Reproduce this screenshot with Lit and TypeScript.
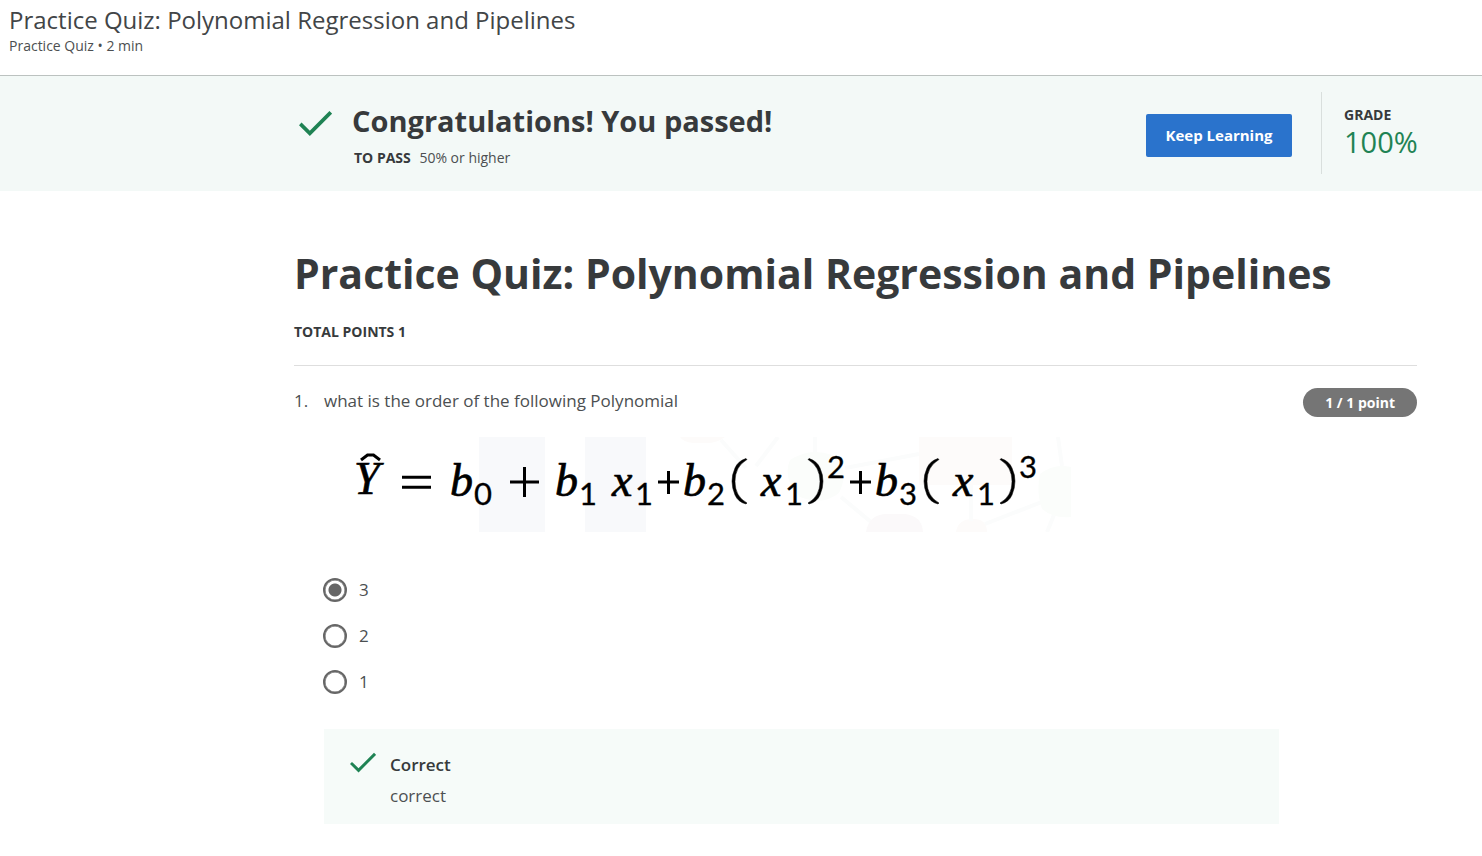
import { LitElement, html, css, svg } from "lit";
import { customElement, property, state } from "lit/decorators.js";

@customElement("check-mark")
class CheckMark extends LitElement {
  static styles = css`
    :host { display: block; }
    .mark { display: block; width: 100%; height: auto; }
    .stroke { fill: none; stroke: #1f8354; stroke-width: 3.6; }
  `;
  render() {
    return html`<svg class="mark" viewBox="0 0 32 26" aria-hidden="true">
      <path class="stroke" d="M1.2 13.5 L10.5 22.6 L30.8 2.3" />
    </svg>`;
  }
}

@customElement("pass-banner")
class PassBanner extends LitElement {
  static styles = css`
    :host { display: block; background: #f3f9f7; border-top: 1px solid #bcc2c0; }
    .inner { display: flex; align-items: flex-start; padding: 16px 65px 17px 299px; }
    .check { width: 33px; margin: 18px 20px 0 0; }
    .copy { flex: 1; padding-top: 9px; }
    .title { margin: 0; font-size: 29px; line-height: 40px; font-weight: 700; }
    .rule { margin: 6px 0 0 2px; font-size: 14px; line-height: 22px; color: #4c4f51; }
    .rule b { margin-right: 5px; color: #373a3c; }
    .keep {
      margin: 22px 29px 0 0; width: 146px; height: 43px; border: 0; border-radius: 2px; padding: 0 0 2px;
      background: #2a73cc; color: #fff; font: 700 15px/20px "Open Sans", sans-serif;
    }
    .grade { border-left: 1px solid #d9dfdd; padding: 13px 0 12px 22px; height: 57px; width: 73px; }
    .label { font-size: 14px; line-height: 20px; font-weight: 700; }
    .score { font-size: 29px; line-height: 34px; color: #1f8354; }
  `;
  render() {
    return html`<div class="inner">
      <check-mark class="check"></check-mark>
      <div class="copy">
        <h2 class="title">Congratulations! You passed!</h2>
        <p class="rule"><b>TO PASS</b> 50% or higher</p>
      </div>
      <button class="keep" type="button">Keep Learning</button>
      <div class="grade">
        <div class="label">GRADE</div>
        <div class="score">100%</div>
      </div>
    </div>`;
  }
}

type Glyph = [kind: string, x: number, y: number, text: string];

const GLYPHS: Glyph[] = [
  ["var", 354, 494, "Y"],
  ["var", 450, 496, "b"], ["sub", 474, 505, "0"],
  ["var", 555, 496, "b"], ["sub", 579, 505, "1"],
  ["var", 612, 496, "x"], ["sub", 635, 505, "1"],
  ["var", 683, 496, "b"], ["sub", 707, 505, "2"],
  ["var", 761, 496, "x"], ["sub", 785, 505, "1"],
  ["sub", 827, 478, "2"],
  ["var", 875, 496, "b"], ["sub", 899, 505, "3"],
  ["var", 953, 496, "x"], ["sub", 977, 505, "1"],
  ["sub", 1019, 478, "3"],
];

@customElement("polynomial-figure")
class PolynomialFigure extends LitElement {
  static styles = css`
    :host { display: block; }
    .figure { display: block; width: 748px; max-width: 100%; height: auto; }
    .var { font: italic 46px "Liberation Serif", serif; stroke: #000; stroke-width: 0.7; }
    .sub { font: 31px Lato, sans-serif; stroke: #000; stroke-width: 0.3; }
    .line { fill: none; stroke: #000; stroke-width: 3; }
    .paren { fill: #000; stroke: #000; stroke-width: 0.5; }
    .blue { fill: #f8f9fb; }
    .peach { fill: #fdfbfa; }
    .rose { fill: #fbf9fa; }
    .green { fill: #fbfdfb; }
    .edge { fill: none; stroke: #fbfcfc; stroke-width: 4; }
  `;
  render() {
    return html`<svg class="figure" viewBox="324 437 748 95" role="img" aria-label="Polynomial equation of order three">
      <path class="blue" d="M479 437h66v95h-66zM585 437h61v95h-61z" />
      <path class="peach" d="M919 437h93v48h-93zM680 437h45q-8 6-18 6h-14q-10-1-13-6zM956 532q2-13 17-13 14 0 14 13z" />
      <path class="edge" d="M721 440l25 28M778 437l-22 29M815 437v24M845 468l74-14M841 497l30 25M971 485v36M985 524l62-24M1058 437l4 29M1056 510l-9 22" />
      <path class="green" d="M790 460q20-13 42-5 19 13 7 38-16 13-39 4-18-18-10-37zM1040 474q14-11 31-7v50q-17 2-29-8-6-17-2-35z" />
      <path class="rose" d="M866 532q3-18 21-18h18q17 2 18 18z" />
      <path class="line" d="M402 477.3h29M402 487.3h29M510 482h29M524.5 467v30M658 482h21M668.5 471v23M850 482h21M860.5 471v23" />
      <path class="line" d="M361 460L367.5 455H373.5L380 460" />
      ${[0, 192].map(
        (dx) => svg`<path class="paren" transform="translate(${dx} 0)"
          d="M747 459.5q-12 7-12 22t12 21.500l-1 1q-8-2-11-9-6-14 0-27 3-7 11-9.500zM808 459.500q12 7 12 22t-12 21.500l1 1q8-2 11-9 6-14 0-27-3-7-11-9.500z" />`,
      )}
      ${GLYPHS.map(([kind, x, y, text]) => svg`<text class=${kind} x=${x} y=${y}>${text}</text>`)}
    </svg>`;
  }
}

@customElement("quiz-question")
class QuizQuestion extends LitElement {
  @property({ type: Array }) choices: string[] = ["3", "2", "1"];
  @state() private selected = "3";

  static styles = css`
    :host { display: block; font-size: 17px; line-height: 24px; color: #4c4f51; }
    .row { display: flex; align-items: flex-start; padding-top: 22px; }
    .number { width: 30px; padding-top: 1px; }
    .prompt { flex: 1; margin: 0; padding-top: 1px; }
    .points {
      border-radius: 15px; background: #757575; color: #fff;
      font-size: 14px; line-height: 29px; font-weight: 700; padding: 0 22px;
    }
    .body { margin-left: 30px; }
    .figure { margin-top: 20px; }
    .choices { border: 0; margin: 43px 0 0; padding: 0; display: grid; gap: 16px; justify-content: start; }
    .choice { display: flex; align-items: center; height: 30px; gap: 12px; margin-left: -1px; }
    .radio {
      appearance: none; box-sizing: border-box; width: 24px; height: 24px; margin: 0;
      border: 2px solid #666; border-radius: 50%; background: #fff;
      box-shadow: inset 0 0 0 0.5px #666;
    }
    .radio:checked { background: radial-gradient(circle, #666 6px, #fff 7px); }
    .feedback {
      display: flex; gap: 14px; margin: 32px 138px 0 0; padding: 23px 26px 15px;
      background: #f6fbf9;
    }
    .check { width: 26px; }
    .verdict { font-weight: 600; line-height: 26px; color: #373a3c; }
    .note { margin: 5px 0 0; line-height: 26px; }
  `;
  render() {
    return html`
      <div class="row">
        <span class="number">1.</span>
        <p class="prompt">what is the order of the following Polynomial</p>
        <span class="points">1 / 1 point</span>
      </div>
      <div class="body">
        <polynomial-figure class="figure"></polynomial-figure>
        <fieldset class="choices" aria-label="Order of the polynomial">
          ${this.choices.map(
            (c) => html`<label class="choice">
              <input class="radio" type="radio" name="order" .value=${c}
                .checked=${c === this.selected} @change=${() => (this.selected = c)} />
              <span>${c}</span>
            </label>`,
          )}
        </fieldset>
        <div class="feedback">
          <check-mark class="check"></check-mark>
          <div>
            <div class="verdict">Correct</div>
            <p class="note">correct</p>
          </div>
        </div>
      </div>
    `;
  }
}

@customElement("app-root")
class AppRoot extends LitElement {
  static styles = css`
    :host {
      display: block; min-height: 100vh; box-sizing: border-box; padding-bottom: 32px;
      background: #fff; color: #373a3c; font-family: "Open Sans", sans-serif;
    }
    .head { padding: 4px 9px 19px; }
    .name { font-size: 24px; line-height: 32px; color: #424547; }
    .meta { font-size: 14px; line-height: 20px; color: #4c4f51; }
    .main { padding: 53px 65px 0 294px; }
    .title { margin: 0; font-size: 41px; line-height: 58px; font-weight: 700; }
    .total { margin: 19px 0 0; padding-bottom: 23px; border-bottom: 1px solid #dedede; font-size: 14px; line-height: 21px; font-weight: 700; }
  `;
  render() {
    return html`
      <header class="head">
        <div class="name">Practice Quiz: Polynomial Regression and Pipelines</div>
        <div class="meta">Practice Quiz • 2 min</div>
      </header>
      <pass-banner></pass-banner>
      <main class="main">
        <h1 class="title">Practice Quiz: Polynomial Regression and Pipelines</h1>
        <p class="total">TOTAL POINTS 1</p>
        <quiz-question></quiz-question>
      </main>
    `;
  }
}
